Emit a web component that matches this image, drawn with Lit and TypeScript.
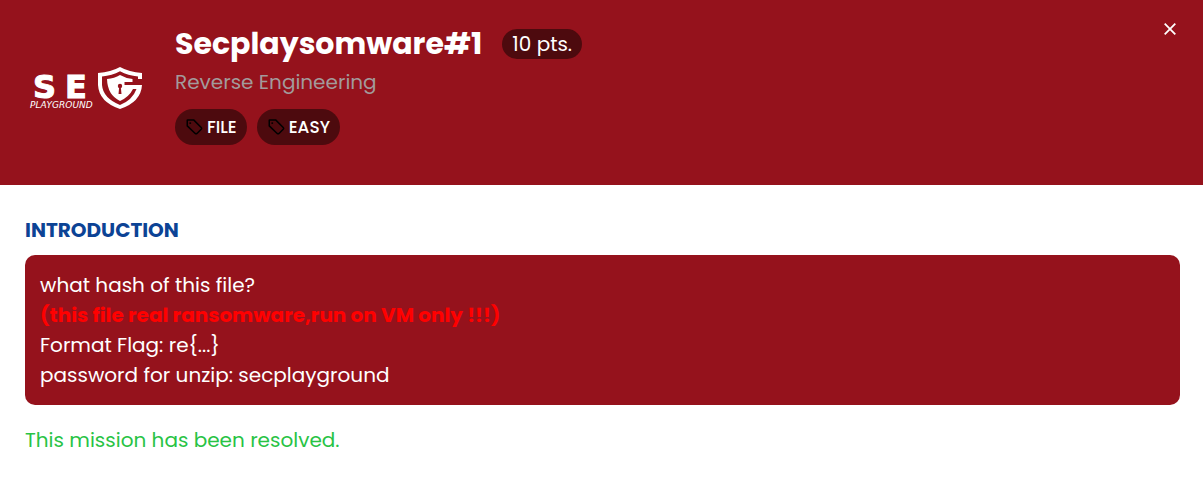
import { LitElement, html, css } from "lit";
import { customElement, property } from "lit/decorators.js";

@customElement("mission-tag")
class MissionTag extends LitElement {
  @property() label = "";

  static styles = css`
    :host {
      display: inline-flex;
      align-items: center;
      gap: 4px;
      height: 36px;
      padding: 0 10px;
      border-radius: 18px;
      background: #4d0a0e;
      color: #fff;
      font-size: 17px;
      font-weight: 500;
    }
    .icon {
      width: 18px;
      height: 18px;
      flex: none;
    }
  `;

  render() {
    return html`
      <svg class="icon" viewBox="0 0 24 24" fill="none" stroke="#000" stroke-width="2" stroke-linejoin="round" aria-hidden="true">
        <path d="M3 3V10.5L13.6 20.600Q14.800 21.600 16 20.600L21.600 15Q22.700 13.800 21.600 12.600L11.500 2.500H3.500Q3 2.500 3 3Z" />
        <circle cx="7" cy="6.800" r="1.300" fill="#000" stroke="none" />
      </svg>
      <span>${this.label}</span>
    `;
  }
}

@customElement("brand-logo")
class BrandLogo extends LitElement {
  static styles = css`
    :host {
      display: block;
    }
    .logo {
      display: block;
      width: 120px;
      height: 50px;
    }
    .mark {
      font: 700 32px "DejaVu Sans", sans-serif;
      stroke: #fff;
      stroke-width: 1;
    }
    .sub {
      font: italic 9px "DejaVu Sans", sans-serif;
    }
  `;

  render() {
    return html`
      <svg class="logo" viewBox="0 0 120 50" fill="#fff" role="img" aria-label="SEC Playground">
        <text class="mark" x="8" y="33">S</text>
        <text class="mark" x="40" y="33">E</text>
        <text class="sub" x="5" y="43">PLAYGROUND</text>
        <path d="M95 2Q104 7 117 8V14H113V11.500Q103 10.500 95 6.300Q87 10.500 77 11.500V20Q78 33 95 40Q107.500 35 111.500 24H99V20H117Q116 37 95 44Q74 37 73 20V8Q86 7 95 2Z" />
        <path d="M95 10Q100 13 107.500 14V17H100V24H108Q104 32 95 36Q82.500 30 82 14Q89.500 13.500 95 10Z" />
        <path d="M109 17H99.500V20H109Z" fill="#95121c" />
        <circle cx="95" cy="21" r="2.200" fill="#95121c" />
        <path d="M94.300 21H95.700L96.500 29H93.500Z" fill="#95121c" />
      </svg>
    `;
  }
}

@customElement("app-root")
class AppRoot extends LitElement {
  static styles = css`
    :host {
      display: block;
      min-height: 100vh;
      background: #fff;
      font-family: Poppins, Inter, sans-serif;
      font-size: 20px;
      line-height: 30px;
    }
    .header {
      display: flex;
      align-items: flex-start;
      gap: 30px;
      padding: 25px 25px 40px;
      background: #95121c;
      color: #fff;
    }
    .brand {
      align-self: center;
      padding-top: 10px;
    }
    .info {
      flex: 1;
      min-width: 0;
    }
    .heading {
      display: flex;
      flex-wrap: wrap;
      align-items: center;
      gap: 20px;
      min-height: 38px;
    }
    .title {
      margin: 0;
      font-size: 30px;
      line-height: 38px;
      font-weight: 700;
    }
    .points {
      padding: 0 10px;
      border-radius: 15px;
      background: #4d0a0e;
    }
    .category {
      margin: 4px 0 12px;
      color: #a39a9b;
    }
    .tags {
      display: flex;
      flex-wrap: wrap;
      gap: 10px;
    }
    .close {
      display: flex;
      padding: 2px;
      margin-top: -4px;
      border: 0;
      background: none;
      color: #fff;
      cursor: pointer;
    }
    .cross {
      width: 12px;
      height: 12px;
    }
    .body {
      padding: 30px 23px 24px 25px;
    }
    .section {
      margin: 0 0 10px;
      font-size: 20px;
      line-height: 30px;
      font-weight: 700;
      color: #0c4395;
    }
    .panel {
      padding: 15px;
      border-radius: 10px;
      background: #95121c;
      color: #fff;
    }
    .line {
      margin: 0;
    }
    .warning {
      color: #f00;
      font-weight: 700;
    }
    .status {
      margin: 20px 0 0;
      color: #28c345;
    }
  `;

  render() {
    return html`
      <header class="header">
        <brand-logo class="brand"></brand-logo>
        <div class="info">
          <div class="heading">
            <h1 class="title">Secplaysomware#1</h1>
            <span class="points">10 pts.</span>
          </div>
          <p class="category">Reverse Engineering</p>
          <div class="tags">
            ${["FILE", "EASY"].map((t) => html`<mission-tag .label=${t}></mission-tag>`)}
          </div>
        </div>
        <button class="close" type="button" aria-label="Close">
          <svg class="cross" viewBox="0 0 12 12" stroke="#fff" stroke-width="1.8" aria-hidden="true">
            <path d="M.7.700 11.300 11.300M11.300.700.700 11.300" />
          </svg>
        </button>
      </header>
      <main class="body">
        <h2 class="section">INTRODUCTION</h2>
        <div class="panel">
          <p class="line">what hash of this file?</p>
          <p class="line"><strong class="warning">(this file real ransomware,run on VM only !!!)</strong></p>
          <p class="line">Format Flag: re{...}</p>
          <p class="line">password for unzip: secplayground</p>
        </div>
        <p class="status">This mission has been resolved.</p>
      </main>
    `;
  }
}
